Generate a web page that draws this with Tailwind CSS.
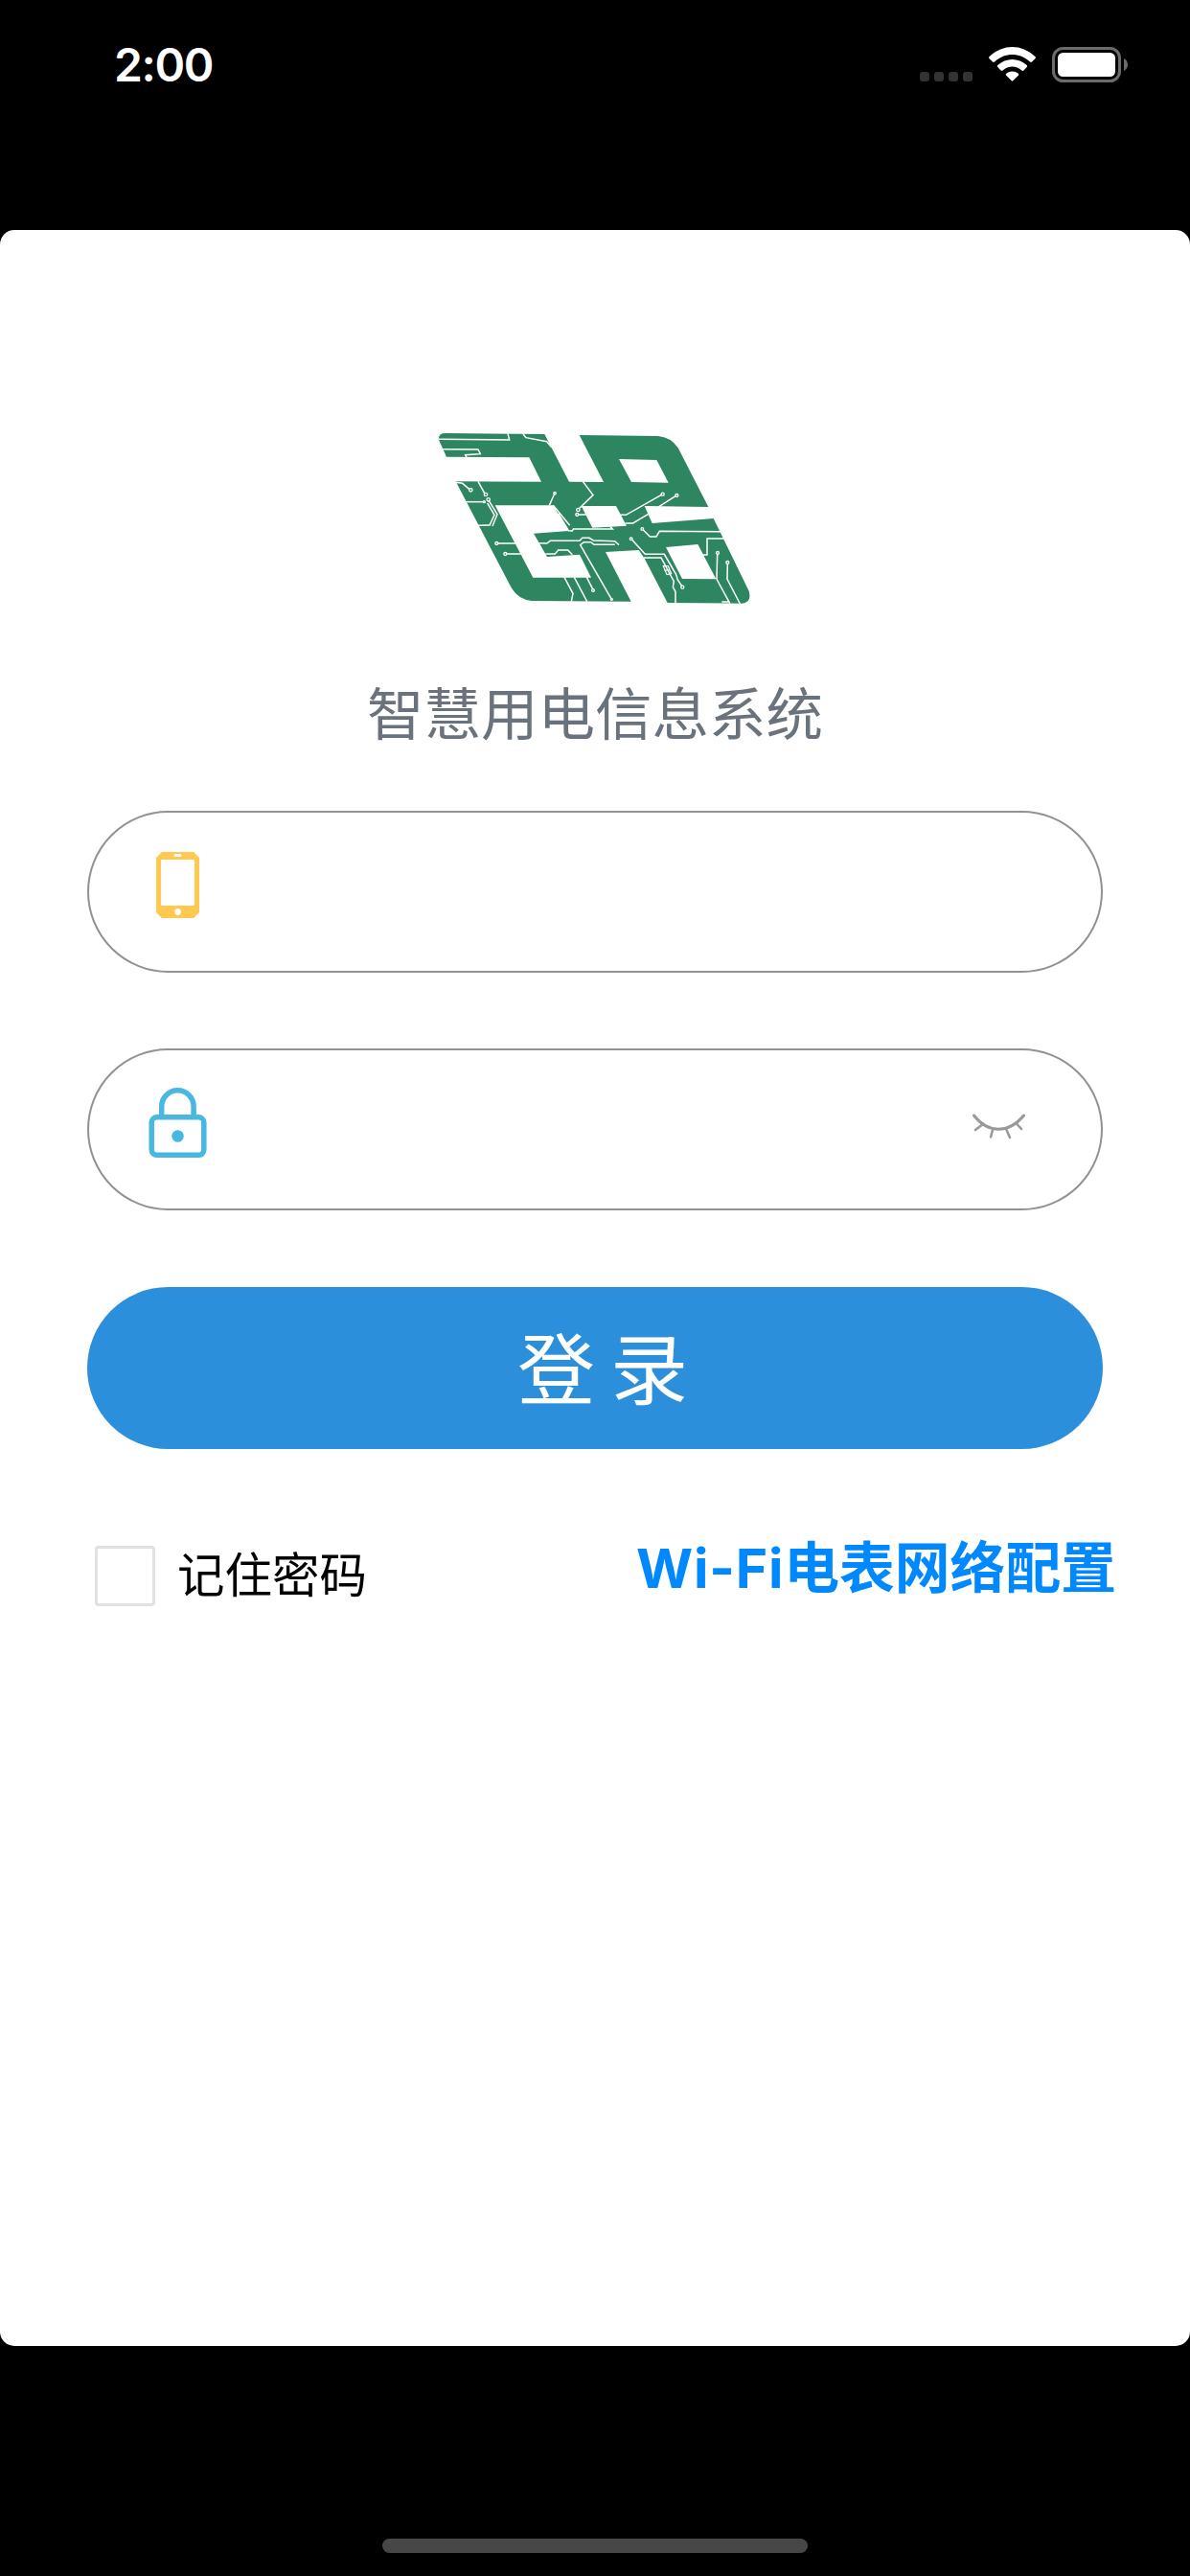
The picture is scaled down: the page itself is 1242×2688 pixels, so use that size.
<!DOCTYPE html>
<html lang="zh-CN">
<head>
    <meta charset="UTF-8">
    <meta name="viewport" content="width=device-width, initial-scale=1.0">
    <title>智慧用电信息系统</title>
    <script src="https://cdn.jsdelivr.net/npm/@tailwindcss/browser@4"></script>
</head>
<body class="bg-black h-[2688px] w-[1242px] overflow-hidden flex flex-col font-['Noto_Sans_CJK_SC',sans-serif]">

    <!-- status bar -->
    <header class="h-[240px] shrink-0 flex items-start justify-between pl-[119px] pr-[64px]">
        <p class="pt-[38px] text-[48px] leading-[60px] tracking-[-1.4px] font-semibold text-white font-['Inter',sans-serif]">2:00</p>

        <svg class="mt-[40px]" width="220" height="56" viewBox="0 0 220 56">
            <g fill="#333">
                <rect x="2" y="35" width="10" height="10" rx="3"/>
                <rect x="17" y="35" width="10" height="10" rx="3"/>
                <rect x="32" y="35" width="10" height="10" rx="3"/>
                <rect x="47" y="35" width="10" height="10" rx="3"/>
            </g>
            <g fill="#fff">
                <path d="M74.6 19 Q73.4 20 74.6 21.2 L78 24.6 Q79 25.4 80 24.5 C91 14.6 106 14.6 117 24.5 Q118 25.4 119 24.6 L122.4 21.2 Q123.6 20 122.4 19 C108 5.700 89 5.700 74.6 19 Z"/>
                <path d="M83.300 28 Q82.200 29 83.300 30.100 L86.600 33.500 Q87.600 34.300 88.600 33.500 C94.500 28.300 102.500 28.300 108.400 33.500 Q109.400 34.300 110.400 33.500 L113.700 30.100 Q114.800 29 113.700 28 C105 20 92 20 83.300 28 Z"/>
                <path d="M92.200 36.700 C96 33.600 101 33.600 104.800 36.700 Q105.900 37.600 104.800 38.700 L99.200 44.300 Q98.500 45 97.800 44.300 L92.200 38.700 Q91.100 37.600 92.200 36.700 Z"/>
            </g>
            <rect x="141.500" y="10.500" width="69" height="34" rx="10" fill="none" stroke="#6b6b6b" stroke-width="3"/>
            <rect x="146" y="15" width="60" height="25" rx="5.500" fill="#fff"/>
            <path d="M215 21 C220.300 23.500 220.300 31.500 215 34 Z" fill="#6b6b6b"/>
        </svg>
    </header>

    <main class="h-[2208px] shrink-0 bg-white rounded-[15px] pt-[190px] flex flex-col">

        <!-- logo -->
        <svg class="ml-[440px]" width="360" height="210" viewBox="0 0 1080 630">
            <path fill="#2d8660" fill-rule="evenodd" d="M72 66 L385 69 L462 218 L570 219 L494 72 L740 75 Q780 78 803 112 L898 297 L698 294 L722 348 L914 333 L1025 560 Q1035 595 1003 599 L770 597 L697 457 L680 432 L576 438 L656 593 L345 591 Q304 588 281 550 L107 217 L375 218 L337 142 L78 140 L53 85 Q54 67 72 66 Z
                M618 147 L736 150 L773 221 L657 219 Z
                M230 292 L412 292 L432 325 L460 372 L351 380 L393 453 L495 446 L531 518 L349 518 Z
                M500 294 L609 294 L642 356 L535 362 Z
                M765 423 L865 414 L922 523 L816 522 Z"/>
            <g fill="none" stroke="#fff" stroke-width="4.500">
                <path d="M53 85 L275 87 L270 68"/>
                <path d="M318 69 L327 80 L392 92 L407 110"/>
                <path d="M62 116 L177 117 L184 131 L137 134 L141 142"/>
                <path d="M107 220 L128 223 L150 242"/>
                <path d="M177 217 L197 254"/>
                <path d="M138 281 L193 281"/>
                <path d="M211 278 L237 320 L222 357"/>
                <path d="M206 285 L228 322 L213 354 L178 355"/>
                <path d="M239 411 L294 411 M266 444 L313 444"/>
                <path d="M415 258 L400 292"/>
                <path d="M505 217 L537 260 L492 303"/>
                <path d="M491 321 L516 321"/>
                <path d="M412 292 L464 355"/>
                <path d="M428 318 L460 371 L472 372 L475 366 L598 366 L590 358"/>
                <path d="M365 410 L392 411 L403 403 L495 403 L503 394 L525 394 L538 402 L605 404 L618 416"/>
                <path d="M605 415 L540 415 L530 407 L508 407 L497 416 L595 586"/>
                <path d="M388 444 L418 444 L428 432 L458 432 L472 446"/>
                <path d="M447 517 L474 568 L469 593"/>
                <path d="M478 517 L518 593"/>
                <path d="M517 517 L537 556"/>
                <path d="M751 259 L640 322 L622 322"/>
                <path d="M795 263 L740 298 M710 319 L662 348 L638 348"/>
                <path d="M694 369 L715 390 L735 390 L745 373 L937 374"/>
                <path d="M947 396 L894 396 L894 447 L878 447"/>
                <path d="M659 400 L700 445 L760 445 L798 510 L801 523 L815 545"/>
                <path d="M695 456 L750 456 L790 530 L787 548 L795 562 L795 598"/>
                <path d="M757 482 L772 482 L782 506 L768 509 Z M760 496 L778 494" stroke-width="3.500"/>
                <path d="M926 446 L924 523 L965 598 M940 594 L965 594"/>
                <path d="M958 475 L957 523 L997 600"/>
            </g>
            <g fill="#2d8660" stroke="#fff" stroke-width="4">
                <circle cx="154" cy="244" r="5"/>
                <circle cx="201" cy="258" r="5"/>
                <circle cx="209" cy="274" r="5"/>
                <circle cx="196" cy="281" r="3"/>
                <circle cx="235" cy="411" r="4.500"/>
                <circle cx="262" cy="444" r="4.500"/>
                <circle cx="417" cy="254" r="3.500"/>
                <circle cx="490" cy="306" r="5"/>
                <circle cx="487" cy="321" r="4.500"/>
                <circle cx="537" cy="558" r="4"/>
                <circle cx="595" cy="586" r="3"/>
                <circle cx="755" cy="257" r="4.500"/>
                <circle cx="799" cy="261" r="4.500"/>
                <circle cx="691" cy="366" r="4"/>
                <circle cx="656" cy="397" r="4"/>
                <circle cx="817" cy="548" r="4.500"/>
                <circle cx="927" cy="441" r="4.500"/>
                <circle cx="958" cy="471" r="4.500"/>
            </g>
        </svg>

        <h1 class="mt-[61px] h-[80px] text-center text-[59.5px] leading-[80px] text-[#6a737d]">智慧用电信息系统</h1>

        <form class="mt-[65px] mx-[91px] flex flex-col gap-[79px]">
            <label class="h-[169px] rounded-full border-2 border-[#929292] flex items-start pl-[70px] pt-[41px]">
                <svg width="46" height="70" viewBox="0 0 46 70">
                    <path fill="#ffc850" fill-rule="evenodd" d="M6 0 H39 L45 6 V63 L39 69 H6 L0 63 V6 Z M5 9 V55 Q5 56 6 56 H39 Q40 56 40 55 V9 Q40 8 39 8 H6 Q5 8 5 9 Z M20 2 Q18.500 2 18.500 3.500 Q18.500 5 20 5 H25 Q26.500 5 26.500 3.500 Q26.500 2 25 2 Z M22.500 59 A3.500 3.500 0 1 0 22.600 59 Z"/>
                </svg>
            </label>

            <label class="h-[169px] rounded-full border-2 border-[#929292] flex items-start justify-between pl-[62px] pr-[78px] pt-[39px]">
                <svg width="62" height="74" viewBox="0 0 62 74" fill="none" stroke="#48b8e1">
                    <path stroke-width="5.500" d="M13.700 31 V19.500 A16.700 16.700 0 0 1 47.100 19.500 V31"/>
                    <rect x="3.200" y="30.800" width="54.600" height="39.500" rx="5.500" stroke-width="5.500"/>
                    <circle cx="30.500" cy="50.500" r="6.300" fill="#48b8e1" stroke="none"/>
                </svg>
                <svg class="mt-[26px]" width="56" height="28" viewBox="0 0 56 28" fill="none" stroke="#999" stroke-width="3" stroke-linecap="round">
                    <path d="M1.500 3 C16 22 38 22 53.500 3"/>
                    <path stroke-width="2.500" d="M11 12 L3 18 M21 18 L19 25.500 M35.500 18 L39 26 M46 11.500 L51 17"/>
                </svg>
            </label>

            <button type="button" class="mt-[1px] h-[169px] rounded-full bg-[#2c8fdb] text-white text-[81px] leading-[162px] pb-[7px] pl-[16px] [word-spacing:-2px]">登 录</button>
        </form>

        <div class="mt-[77px] pl-[99px] pr-[77px] flex justify-between items-start">
            <div class="flex items-start gap-[23px] pt-[24px]">
                <span class="size-[63px] rounded-[4px] border-[3px] border-[#e1e1e1]"></span>
                <span class="-mt-[4px] text-[49.5px] leading-[63px] text-black">记住密码</span>
            </div>
            <a class="mt-[5px] text-[57.8px] leading-[76px] font-bold text-[#0088ff]"><span class="text-[57px] tracking-[0.8px] font-['Inter',sans-serif]">Wi-Fi</span>电表网络配置</a>
        </div>
    </main>

    <!-- home indicator -->
    <footer class="grow flex items-end justify-center pb-[24px]">
        <div class="h-[15px] w-[444px] rounded-full bg-[#474747]"></div>
    </footer>
</body>
</html>
